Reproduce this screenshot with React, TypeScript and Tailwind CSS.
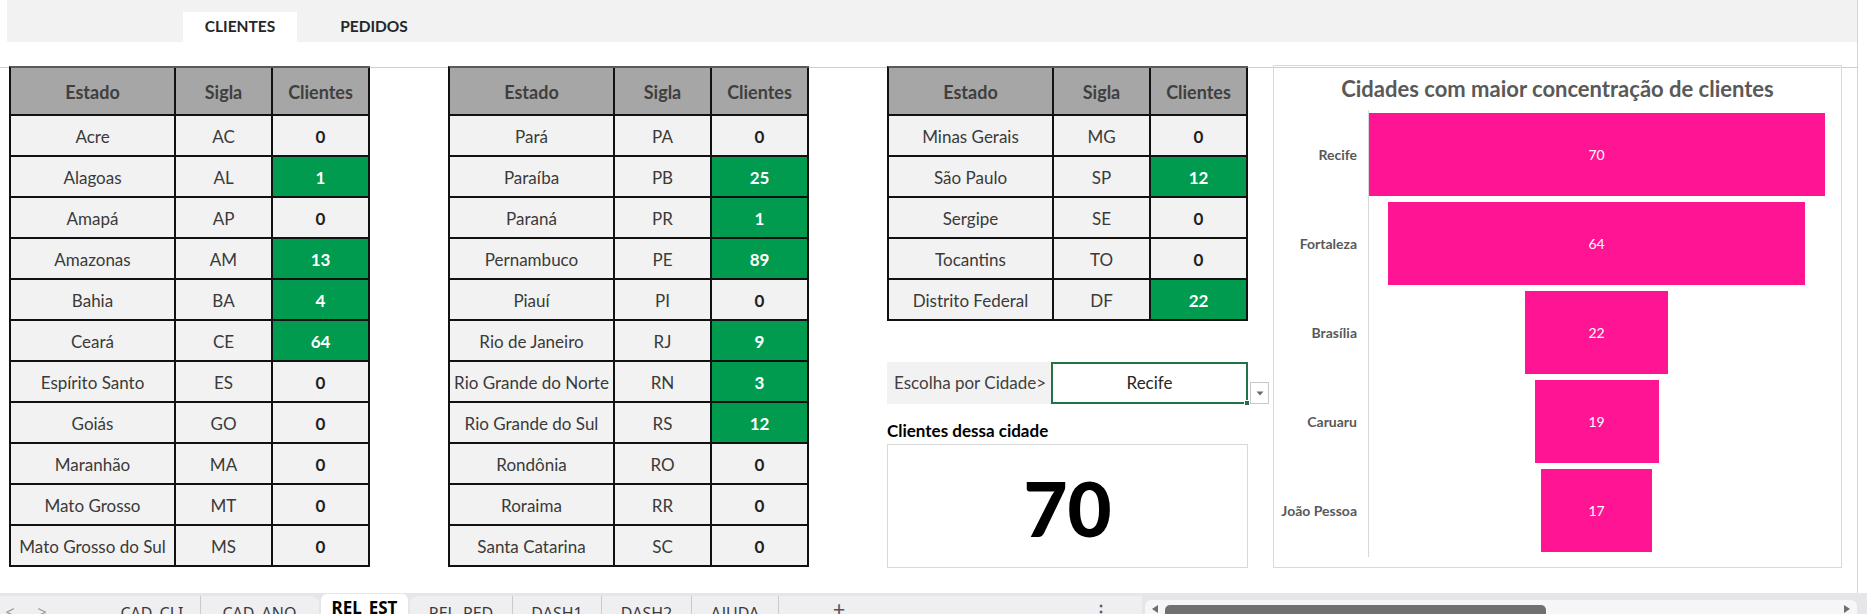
import React from "react";

type Row = [string, string, number];

const t1: Row[] = [
  ["Acre", "AC", 0],
  ["Alagoas", "AL", 1],
  ["Amapá", "AP", 0],
  ["Amazonas", "AM", 13],
  ["Bahia", "BA", 4],
  ["Ceará", "CE", 64],
  ["Espírito Santo", "ES", 0],
  ["Goiás", "GO", 0],
  ["Maranhão", "MA", 0],
  ["Mato Grosso", "MT", 0],
  ["Mato Grosso do Sul", "MS", 0],
];
const t2: Row[] = [
  ["Pará", "PA", 0],
  ["Paraíba", "PB", 25],
  ["Paraná", "PR", 1],
  ["Pernambuco", "PE", 89],
  ["Piauí", "PI", 0],
  ["Rio de Janeiro", "RJ", 9],
  ["Rio Grande do Norte", "RN", 3],
  ["Rio Grande do Sul", "RS", 12],
  ["Rondônia", "RO", 0],
  ["Roraima", "RR", 0],
  ["Santa Catarina", "SC", 0],
];
const t3: Row[] = [
  ["Minas Gerais", "MG", 0],
  ["São Paulo", "SP", 12],
  ["Sergipe", "SE", 0],
  ["Tocantins", "TO", 0],
  ["Distrito Federal", "DF", 22],
];

const cities: [string, number][] = [
  ["Recife", 70],
  ["Fortaleza", 64],
  ["Brasília", 22],
  ["Caruaru", 19],
  ["João Pessoa", 17],
];

function StateTable({ rows }: { rows: Row[] }) {
  const head = "h-[48px] pt-[2px] bg-[#a6a6a6] border-r-2 border-b-2 border-[#111] flex items-center justify-center text-[18px] font-bold text-[#3f3f3f]";
  const cell = "h-[41px] pt-[2px] bg-[#f2f2f2] border-r-2 border-b-2 border-[#111] flex items-center justify-center text-[17px] text-[#3a3a3a]";
  return (
    <div className="w-[361px] border-l-2 border-t-2 border-l-[#111] border-t-[#5a5a5a] grid grid-cols-[165px_97px_97px]">
      <div className={head}>Estado</div>
      <div className={head}>Sigla</div>
      <div className={head}>Clientes</div>
      {rows.map(([e, s, c]) => (
        <React.Fragment key={s}>
          <div className={cell}>{e}</div>
          <div className={cell}>{s}</div>
          {c > 0 ? (
            <div className="h-[41px] pt-[2px] bg-[#009b4f] border-r-2 border-b-2 border-[#111] flex items-center justify-center text-[17px] font-bold text-white">
              {c}
            </div>
          ) : (
            <div className="h-[41px] pt-[2px] bg-[#f2f2f2] border-r-2 border-b-2 border-[#111] flex items-center justify-center text-[17px] font-bold text-[#1f1f1f]">
              {c}
            </div>
          )}
        </React.Fragment>
      ))}
    </div>
  );
}

function Chart() {
  const unit = 456 / 70;
  return (
    <div className="w-[569px] h-[503px] border border-[#d9d9d9] flex flex-col">
      <div className="h-[44px] flex items-center justify-center text-[22px] font-bold text-[#595959]">
        Cidades com maior concentração de clientes
      </div>
      <div className="flex">
        <div className="w-[94px] pt-[3px] pr-[11px] flex flex-col gap-[6px]">
          {cities.map(([n]) => (
            <div key={n} className="h-[83px] flex items-center justify-end text-[14px] font-bold text-[#595959] whitespace-nowrap">
              {n}
            </div>
          ))}
        </div>
        <div className="w-[456px] h-[447px] border-l border-[#d9d9d9] pt-[3px] flex flex-col items-center gap-[6px]">
          {cities.map(([n, v]) => (
            <div
              key={n}
              className="h-[83px] bg-[#ff1493] flex items-center justify-center text-[14px] text-white"
              style={{ width: Math.round(v * unit) }}
            >
              {v}
            </div>
          ))}
        </div>
      </div>
    </div>
  );
}

function CityColumn() {
  return (
    <div className="w-[361px] flex flex-col mt-[1px]">
      <StateTable rows={t3} />
      <div className="mt-[41px] h-[42px] flex relative">
        <div className="w-[164px] h-[42px] bg-[#f2f2f2] pl-[7px] flex items-center text-[17px] text-[#404040] whitespace-nowrap">
          Escolha por Cidade&gt;
        </div>
        <div className="w-[197px] h-[42px] border-2 border-[#217346] relative flex items-center justify-center text-[17px] text-[#262626]">
          Recife
          <div className="absolute -bottom-[4px] -right-[4px] w-[6px] h-[6px] bg-[#217346] border border-white" />
        </div>
        <div className="absolute top-[20px] -right-[21px] w-[19px] h-[22px] border border-[#c8c8c8] bg-white flex items-center justify-center">
          <svg width="8" height="5" viewBox="0 0 8 5">
            <path d="M0.5 0.5 L7.5 0.5 L4 4.5 Z" fill="#6b6b6b" />
          </svg>
        </div>
      </div>
      <div className="mt-[17px] h-[20px] flex items-center text-[17px] font-bold text-black whitespace-nowrap">
        Clientes dessa cidade
      </div>
      <div className="mt-[3px] h-[124px] pt-[3px] border border-[#d9d9d9] flex items-center justify-center text-[76px] font-black text-black leading-none">
        70
      </div>
    </div>
  );
}

function BottomBar() {
  const sep = "border-r border-[#c9c9ce]";
  return (
    <div className="h-[21px] bg-[#e6e6ea] flex items-start text-[16px] text-[#3a3a3a] font-['Noto_Sans',sans-serif] leading-[20px]">
      <div className="w-[319px] h-[19px] mt-[3px] bg-[#efeff2] rounded-tr-[8px] flex">
        <div className="w-[20px] pt-[6px] text-center text-[#9a9a9a]">&lt;</div>
        <div className="w-[20px] ml-[12px] pt-[6px] text-center text-[#9a9a9a]">&gt;</div>
        <div className="w-[52px]" />
        <div className={`w-[97px] pt-[7px] text-center ${sep}`}>CAD_CLI</div>
        <div className="w-[117px] pt-[7px] text-center">CAD_ANO</div>
      </div>
      <div className="w-[87px] h-[20px] ml-[2px] mt-[1px] bg-white rounded-t-[6px] pt-[4px] text-center font-bold text-black text-[17px]">
        REL_EST
      </div>
      <div className="w-[732px] h-[19px] ml-[2px] mt-[3px] bg-[#efeff2] rounded-tl-[8px] flex">
        <div className={`w-[103px] pt-[7px] text-center ${sep}`}>REL_PED</div>
        <div className={`w-[89px] pt-[7px] text-center ${sep}`}>DASH1</div>
        <div className={`w-[90px] pt-[7px] text-center ${sep}`}>DASH2</div>
        <div className={`w-[87px] pt-[7px] text-center ${sep}`}>AJUDA</div>
        <div className="w-[120px] pt-[2px] text-center text-[22px] text-[#555]">+</div>
        <div className="w-[220px] pt-[5px] text-right pr-[10px] text-[#555] font-bold">⋮</div>
      </div>
      <div className="w-[712px] h-[15px] ml-[3px] mt-[7px] bg-[#f6f6f8] rounded-t-[6px] flex items-start">
        <div className="w-[20px] pt-[5px] flex justify-center">
          <svg width="6" height="8" viewBox="0 0 6 8">
            <path d="M6 0 L0 4 L6 8 Z" fill="#6e6e6e" />
          </svg>
        </div>
        <div className="w-[381px] h-[10px] mt-[5px] bg-[#707070] rounded-t-[5px]" />
        <div className="flex-1" />
        <div className="w-[20px] pt-[5px] flex justify-center">
          <svg width="6" height="8" viewBox="0 0 6 8">
            <path d="M0 0 L6 4 L0 8 Z" fill="#6e6e6e" />
          </svg>
        </div>
      </div>
    </div>
  );
}

export default function App() {
  return (
    <div className="w-[1867px] h-[614px] overflow-hidden bg-white flex flex-col font-['Lato',sans-serif]">
      <div className="h-[593px] flex">
        <div className="w-[1858px] border-r border-[#d4d4d4] flex flex-col">
          <div className="h-[42px] ml-[7px] bg-[#f2f2f2] flex items-end pl-[176px] gap-[20px]">
            <div className="w-[114px] h-[30px] bg-white flex items-center justify-center text-[15.5px] font-bold text-[#262626]">
              CLIENTES
            </div>
            <div className="w-[114px] h-[30px] flex items-center justify-center text-[15.5px] font-bold text-[#262626]">
              PEDIDOS
            </div>
          </div>
          <div className="h-[25px]" />
          <div className="border-t border-[#cfcfcf]">
            <div className="-mt-[3px] flex items-start pl-[9px]">
              <div className="mt-[1px]">
                <StateTable rows={t1} />
              </div>
              <div className="mt-[1px] ml-[78px]">
                <StateTable rows={t2} />
              </div>
              <div className="ml-[78px]">
                <CityColumn />
              </div>
              <div className="ml-[25px]">
                <Chart />
              </div>
            </div>
          </div>
        </div>
        <div className="flex-1 bg-white" />
      </div>
      <BottomBar />
    </div>
  );
}
